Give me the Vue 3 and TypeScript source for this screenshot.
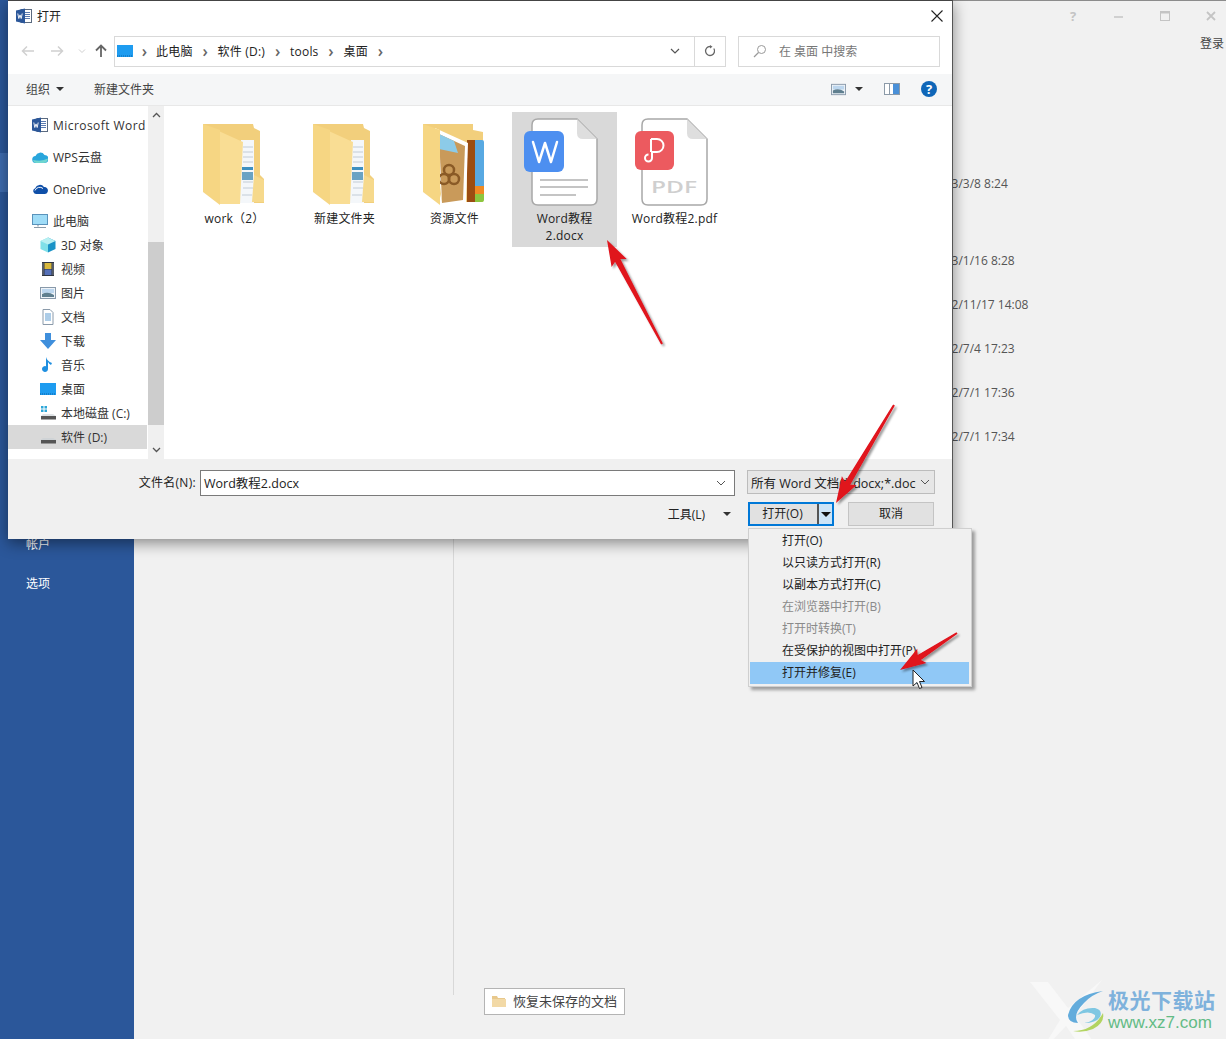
<script setup lang="ts">
const navRows = [
  { label: 'Microsoft Word', icon: 'word', cls: 'group wide' },
  { label: 'WPS云盘', icon: 'cloud', cls: 'group' },
  { label: 'OneDrive', icon: 'onedrive', cls: 'group' },
  { label: '此电脑', icon: 'pc', cls: 'pc' },
  { label: '3D 对象', icon: 'cube', cls: 'child' },
  { label: '视频', icon: 'film', cls: 'child' },
  { label: '图片', icon: 'pic', cls: 'child' },
  { label: '文档', icon: 'docs', cls: 'child' },
  { label: '下载', icon: 'down', cls: 'child' },
  { label: '音乐', icon: 'music', cls: 'child' },
  { label: '桌面', icon: 'desk', cls: 'child' },
  { label: '本地磁盘 (C:)', icon: 'diskc', cls: 'child' },
  { label: '软件 (D:)', icon: 'diskd', cls: 'child active' }
]

const menuItems = [
  { label: '打开(O)' },
  { label: '以只读方式打开(R)' },
  { label: '以副本方式打开(C)' },
  { label: '在浏览器中打开(B)', off: true },
  { label: '打开时转换(T)', off: true },
  { label: '在受保护的视图中打开(P)' },
  { label: '打开并修复(E)', hot: true }
]

const dates = [
  { text: '2023/3/8 8:24', gap: 0 },
  { text: '2023/1/16 8:28', gap: 55 },
  { text: '2022/11/17 14:08', gap: 22 },
  { text: '2022/7/4 17:23', gap: 22 },
  { text: '2022/7/1 17:36', gap: 22 },
  { text: '2022/7/1 17:34', gap: 22 }
]

// tail -> tip, the three red pointers drawn over the shot
const arrows = [
  [662, 344, 607, 240],
  [894, 405, 836, 503],
  [957, 633, 900, 670]
]

function arrowPoints(a: number[]) {
  const [x1, y1, x2, y2] = a
  const len = Math.hypot(x2 - x1, y2 - y1)
  const ux = (x2 - x1) / len
  const uy = (y2 - y1) / len
  const nx = -uy
  const ny = ux
  const at = (along: number, side: number) =>
    `${(x1 + ux * along + nx * side).toFixed(1)},${(y1 + uy * along + ny * side).toFixed(1)}`
  const neck = len - 23
  return [
    at(0, -1), at(neck, -3), at(neck - 3, -8.5), at(len, 0),
    at(neck - 3, 8.5), at(neck, 3), at(0, 1)
  ].join(' ')
}
</script>

<template>
  <div class="app">
    <svg width="0" height="0" class="defs">
      <defs>
        <symbol id="word" viewBox="0 0 16 16">
          <rect x="5" y="1.500" width="10.500" height="13" fill="#fff" stroke="#5a6a80" />
          <path d="M9 4.500h5M9 6.500h5M9 8.500h5M9 10.500h5" stroke="#5a7ab0" />
          <path d="M0 2.500 9 .5v15l-9-2z" fill="#2b579a" />
          <path d="M1.800 5.500l1 5 1.200-3.600 1.200 3.600 1-5" fill="none" stroke="#fff" stroke-width=".9" />
        </symbol>
        <symbol id="cloud" viewBox="0 0 16 16">
          <path d="M4 14a3.500 3.500 0 0 1-.5-7 5 5 0 0 1 9-1 4 4 0 0 1 0 8z" fill="#29a6dc" />
          <path d="M1 11a3.500 3.500 0 0 0 3 3h8a4 4 0 0 0 3.800-4.400Q10 13 1 11z" fill="#6fd6d0" />
        </symbol>
        <symbol id="onedrive" viewBox="0 0 16 16">
          <path d="M4 13a3 3 0 0 1-.8-5.800A5 5 0 0 1 12 6a3.600 3.600 0 0 1 3.800 4.500A3 3 0 0 1 13 13z" fill="#0f4fa8" />
          <path d="M3 9.500a5 5 0 0 1 8-2" fill="none" stroke="#fff" stroke-width="1" />
        </symbol>
        <symbol id="pc" viewBox="0 0 16 16">
          <rect x=".5" y="1.500" width="15" height="10" fill="#9fdcf7" stroke="#5a93bb" />
          <path d="M6 12v1.500M2 14.500h12" stroke="#8a9aa8" stroke-width="1.200" />
        </symbol>
        <symbol id="cube" viewBox="0 0 16 16">
          <path d="M8 .5 15.500 4v8L8 15.500z" fill="#1a93c7" />
          <path d="M8 .5.500 4v8L8 15.500z" fill="#7fe0e8" />
          <path d="M8 .5 15.500 4 8 7.500.500 4z" fill="#b8f0f2" />
        </symbol>
        <symbol id="film" viewBox="0 0 16 16">
          <rect x="2" y="1" width="12" height="14" fill="#2e3440" />
          <rect x="4.500" y="2" width="7" height="6" fill="#d8b83c" />
          <rect x="4.500" y="8.500" width="7" height="5.500" fill="#5570b8" />
          <path d="M3 2.500v11M13 2.500v11" stroke="#cfd6de" stroke-dasharray="1 1" />
        </symbol>
        <symbol id="pic" viewBox="0 0 16 16">
          <rect x=".5" y="2.500" width="15" height="11" fill="#eef3f8" stroke="#8899aa" />
          <path d="M2 4h12v4H2z" fill="#bcd6ee" />
          <path d="M2 12V9q6-3 12 1v2z" fill="#5f7f8f" />
        </symbol>
        <symbol id="docs" viewBox="0 0 16 16">
          <path d="M3 .5h7l3 3v12H3z" fill="#fff" stroke="#8a9aaa" />
          <path d="M5 5h6M5 7h6M5 9h6M5 11h6" stroke="#5a9ad0" />
        </symbol>
        <symbol id="down" viewBox="0 0 16 16">
          <path d="M5 0h6v7h5l-8 9-8-9h5z" fill="#3f8fdc" />
        </symbol>
        <symbol id="music" viewBox="0 0 16 16">
          <path d="M8 1v11a3 3 0 1 1-2-2.800V0q1 4 6 6l-1 2q-2-1-3-3z" fill="#1f8fe0" />
        </symbol>
        <symbol id="desk" viewBox="0 0 16 16">
          <rect y="2" width="16" height="12" fill="#1e9cf0" />
          <path d="M0 13h16" stroke="#0a63a8" stroke-dasharray="1 1" />
        </symbol>
        <symbol id="diskc" viewBox="0 0 16 16">
          <path d="M1 1h2.500v2.500H1zM4.500 1H7v2.500H4.500zM1 4.500h2.500V7H1zM4.500 4.500H7V7H4.500z" fill="#2ca6d8" />
          <path d="M3 9h10l3 2v3H1v-3z" fill="#dfe3e6" />
          <rect x="1" y="11" width="15" height="3.500" fill="#555" />
        </symbol>
        <symbol id="diskd" viewBox="0 0 16 16">
          <path d="M3 9h10l3 1.500V11H1v-.500z" fill="#cfd3d6" />
          <rect x="1" y="11" width="15" height="3.500" fill="#555" />
        </symbol>
        <symbol id="folder" viewBox="0 0 105 97">
          <path d="M21 12h50l1 4 6 3v44l4 4v24H40z" fill="#f2cf7c" />
          <path d="M59 28h13v63H57z" fill="#f4f7fa" />
          <path d="M61 35h10M61 40h10M61 45h10M61 50h10M61 70h10M61 76h10M60 83h10" stroke="#c2ccd6" />
          <path d="M60 55h11v3H60z" fill="#3d8fc0" />
          <path d="M60 60h11v8H60z" fill="#6aa3c4" />
          <path d="M72 63l10 5v22H70z" fill="#f6d98c" />
          <path d="M30 16l31 14-3 62H38z" fill="#f9dd94" />
          <path d="M21 12l17 6v75L21 80z" fill="#f6d683" />
        </symbol>
        <symbol id="folderArt" viewBox="0 0 105 97">
          <path d="M21 12h50v6l10 2v70H40z" fill="#f2cf7c" />
          <path d="M65 28h9v62h-9z" fill="#9b4d12" />
          <path d="M73 28h7q2 0 2 2v44h-9z" fill="#58a9e2" />
          <path d="M73 74h9v8h-9z" fill="#ef8a24" />
          <path d="M73 82h9v6q0 2-2 2h-7z" fill="#8cc63f" />
          <path d="M33 16l33 15-2 60-24 3z" fill="#fff" />
          <path d="M37 22l26 12-2 54-21 3z" fill="#c99a5a" />
          <path d="M37 22l15 7 4 12-19-4z" fill="#8ccbe8" />
          <circle cx="47" cy="58" r="5" fill="none" stroke="#8a5a26" stroke-width="2.500" />
          <circle cx="42" cy="67" r="5" fill="none" stroke="#8a5a26" stroke-width="2.500" />
          <circle cx="52" cy="67" r="5" fill="none" stroke="#8a5a26" stroke-width="2.500" />
          <path d="M21 12l17 6v75L21 80z" fill="#f6d683" />
        </symbol>
        <symbol id="sheet" viewBox="0 0 105 97">
          <path d="M26 7h39l20 20v60q0 6-6 6H26q-6 0-6-6V13q0-6 6-6z" fill="#fff" stroke="#a8a8a8" stroke-width="1.500" />
          <path d="M65 7v14q0 6 6 6h14z" fill="#dedede" />
        </symbol>
      </defs>
    </svg>

    <aside class="sidebar">
      <div class="side-active"></div>
      <div class="side-spacer"></div>
      <div class="side-row">帐户</div>
      <div class="side-row">选项</div>
    </aside>

    <main class="backstage">
      <div class="recent-left"></div>
      <div class="recent-right">
        <div class="win-controls">
          <span class="win-btn win-q">?</span>
          <svg class="win-btn" width="14" height="14" viewBox="0 0 14 14"><path d="M2 8h9" stroke="#c4c4c4" stroke-width="1.500" /></svg>
          <svg class="win-btn" width="14" height="14" viewBox="0 0 14 14"><rect x="2.500" y="2.500" width="9" height="9" fill="none" stroke="#c4c4c4" /><path d="M2.500 3.500h9" stroke="#c4c4c4" stroke-width="2" /></svg>
          <svg class="win-btn" width="14" height="14" viewBox="0 0 14 14"><path d="M3 3l8 8M11 3l-8 8" stroke="#c4c4c4" stroke-width="1.800" /></svg>
        </div>
        <div class="login">登录</div>
        <div class="dates">
          <div v-for="d in dates" :key="d.text" class="date" :style="{ marginTop: d.gap + 'px' }">{{ d.text }}</div>
        </div>
        <button class="restore">
          <svg width="16" height="14" viewBox="0 0 16 14"><path d="M1 2h5l1 2h7v9H1z" fill="#e8c88c" /><path d="M1 5h14v8H1z" fill="#f2d9a6" /></svg>
          恢复未保存的文档
        </button>
      </div>
    </main>

    <section class="dialog">
      <header class="title-bar">
        <svg class="title-icon" width="16" height="16"><use href="#word" /></svg>
        <span class="title-text">打开</span>
        <svg class="title-close" width="14" height="14" viewBox="0 0 14 14"><path d="M1.500 1.500l11 11M12.500 1.500l-11 11" stroke="#222" stroke-width="1.100" /></svg>
      </header>

      <div class="nav-bar">
        <div class="nav-btns">
          <svg width="14" height="12" viewBox="0 0 14 12"><path d="M13 6H2M6 1.500 1.500 6 6 10.500" fill="none" stroke="#d0d0d0" stroke-width="1.500" /></svg>
          <svg width="14" height="12" viewBox="0 0 14 12"><path d="M1 6h11M8 1.500 12.500 6 8 10.500" fill="none" stroke="#d0d0d0" stroke-width="1.500" /></svg>
          <svg width="8" height="6" viewBox="0 0 8 6"><path d="M1 1.500 4 4.500 7 1.500" fill="none" stroke="#d0d0d0" /></svg>
          <svg width="12" height="14" viewBox="0 0 12 14"><path d="M6 13V2M1 6.500 6 1.500l5 5" fill="none" stroke="#666" stroke-width="1.800" /></svg>
        </div>
        <div class="addr">
          <svg width="16" height="16"><use href="#desk" /></svg>
          <span class="crumb-sep">›</span><span class="crumb">此电脑</span>
          <span class="crumb-sep">›</span><span class="crumb">软件 (D:)</span>
          <span class="crumb-sep">›</span><span class="crumb">tools</span>
          <span class="crumb-sep">›</span><span class="crumb">桌面</span>
          <span class="crumb-sep">›</span>
          <svg class="addr-drop" width="10" height="6" viewBox="0 0 10 6"><path d="M1 1l4 4 4-4" fill="none" stroke="#555" stroke-width="1.200" /></svg>
        </div>
        <div class="addr-refresh">
          <svg width="12" height="12" viewBox="0 0 12 12"><path d="M9.800 3.500A4.500 4.500 0 1 1 6 1.500" fill="none" stroke="#666" stroke-width="1.300" /><path d="M6 0v3.500l-2.500-1.700z" fill="#666" transform="matrix(-1 0 0 1 12 0)" /></svg>
        </div>
        <div class="search">
          <svg width="14" height="14" viewBox="0 0 14 14"><circle cx="8.500" cy="5.500" r="4" fill="none" stroke="#999" /><path d="M5.500 8.500 1 13" stroke="#999" stroke-width="1.200" /></svg>
          <span>在 桌面 中搜索</span>
        </div>
      </div>

      <div class="tool-bar">
        <span class="tool-btn">组织<i class="caret"></i></span>
        <span class="tool-btn tool-new">新建文件夹</span>
        <span class="tool-right">
          <svg width="15" height="15"><use href="#pic" /></svg>
          <i class="caret caret-view"></i>
          <svg class="pane-icon" width="16" height="12" viewBox="0 0 16 12"><rect x=".5" y=".5" width="15" height="11" fill="#fff" stroke="#8c9aa8" /><rect x="9" y="1" width="6" height="10" fill="#4a90d8" /><path d="M5.500 1v10" stroke="#8c9aa8" /></svg>
          <span class="help">?</span>
        </span>
      </div>

      <div class="body">
        <nav class="tree">
          <div v-for="r in navRows" :key="r.label" class="tree-row" :class="r.cls">
            <svg width="16" height="16"><use :href="'#' + r.icon" /></svg>
            <span>{{ r.label }}</span>
          </div>
        </nav>
        <div class="scroll">
          <svg width="9" height="6" viewBox="0 0 9 6"><path d="M1 5l3.500-3.500L8 5" fill="none" stroke="#555" stroke-width="1.300" /></svg>
          <div class="scroll-track"><div class="scroll-thumb"></div></div>
          <svg width="9" height="6" viewBox="0 0 9 6"><path d="M1 1l3.500 3.500L8 1" fill="none" stroke="#555" stroke-width="1.300" /></svg>
        </div>
        <div class="files">
          <div class="file">
            <svg width="105" height="97"><use href="#folder" /></svg>
            <span class="file-name">work（2）</span>
          </div>
          <div class="file">
            <svg width="105" height="97"><use href="#folder" /></svg>
            <span class="file-name">新建文件夹</span>
          </div>
          <div class="file">
            <svg width="105" height="97"><use href="#folderArt" /></svg>
            <span class="file-name">资源文件</span>
          </div>
          <div class="file selected">
            <svg width="105" height="97" viewBox="0 0 105 97">
              <use href="#sheet" width="105" height="97" />
              <rect x="12" y="19" width="40" height="41" rx="6" fill="#4d8ff0" />
              <path d="M21 30l6 20 6-19 6 19 6-20" fill="none" stroke="#fff" stroke-width="2.500" stroke-linejoin="round" stroke-linecap="round" />
              <path d="M28 68h48M28 75h48M28 83h36" stroke="#c4c4c4" stroke-width="2" />
            </svg>
            <span class="file-name">Word教程<br />2.docx</span>
          </div>
          <div class="file">
            <svg width="105" height="97" viewBox="0 0 105 97">
              <use href="#sheet" width="105" height="97" />
              <rect x="13" y="19" width="39" height="39" rx="6" fill="#ec5a5f" />
              <path d="M28 27h6a6.500 6.500 0 0 1 0 13h-5v6a3.500 3.500 0 1 1-3.500-3.500" fill="none" stroke="#fff" stroke-width="2" transform="translate(1 0)" />
              <path d="M29 27v13" stroke="#fff" stroke-width="2" />
              <text x="29" y="81" class="pdf-mark" textLength="46" lengthAdjust="spacingAndGlyphs">PDF</text>
            </svg>
            <span class="file-name">Word教程2.pdf</span>
          </div>
        </div>
      </div>

      <footer class="foot">
        <div class="foot-row">
          <label class="fname-label">文件名(N):</label>
          <div class="fname-input">
            <span>Word教程2.docx</span>
            <svg width="10" height="6" viewBox="0 0 10 6"><path d="M1 1l4 4 4-4" fill="none" stroke="#555" /></svg>
          </div>
          <div class="ftype">
            <span class="ftype-text">所有 Word 文档(*.docx;*.docm;*.dotx)</span>
            <svg width="10" height="6" viewBox="0 0 10 6"><path d="M1 1l4 4 4-4" fill="none" stroke="#555" /></svg>
          </div>
        </div>
        <div class="foot-row foot-actions">
          <span class="tools">工具(L)<i class="caret caret-tools"></i></span>
          <div class="open-btn">
            <span class="open-main">打开(O)</span>
            <span class="open-drop"><i class="caret caret-open"></i></span>
          </div>
          <div class="cancel-btn">取消</div>
        </div>
      </footer>
    </section>

    <div class="menu">
      <div v-for="m in menuItems" :key="m.label" class="menu-item" :class="{ off: m.off, hot: m.hot }">{{ m.label }}</div>
    </div>

    <svg class="pointers" width="1226" height="1039">
      <defs>
        <filter id="arrowShadow" x="-30%" y="-30%" width="160%" height="160%">
          <feDropShadow dx="2" dy="2" stdDeviation="1.200" flood-color="#000" flood-opacity=".4" />
        </filter>
      </defs>
      <polygon v-for="(a, i) in arrows" :key="i" :points="arrowPoints(a)" fill="#e0121c" filter="url(#arrowShadow)" />
      <path d="M913 670v16l4-3.500 2.500 6 2.500-1-2.500-6h5z" fill="#fff" stroke="#222" stroke-width="1" />
    </svg>

    <div class="mark">
      <svg class="mark-x" width="90" height="80" viewBox="0 0 90 80"><path d="M0 2h18l20 26L72 0 45 36l30 42H58L36 46 8 76l22-36z" fill="#f8f8f8" /></svg>
      <svg class="mark-logo" width="44" height="44" viewBox="0 0 44 44">
        <path d="M38 2Q8 6 3 26q0 8 10 8-6-8 6-20Q26 6 38 2z" fill="#4a9fd8" />
        <path d="M12 26q6-8 18-7 8 2 5 9-4 6-16 6 12-2 11-8-6-5-18 0z" fill="#6cc0e0" />
        <path d="M8 42q20 0 30-18 2 10-10 16-10 4-20 2z" fill="#a8cf48" />
      </svg>
      <div class="mark-text">
        <div class="mark-cn">极光下载站</div>
        <div class="mark-url">www.xz7.com</div>
      </div>
    </div>
  </div>
</template>

<style scoped>
.app,
.app * {
  box-sizing: border-box;
}

.app {
  position: relative;
  display: flex;
  width: 1226px;
  height: 1039px;
  overflow: hidden;
  background: #f1f1f1;
  font-family: "Open Sans", "Noto Sans CJK SC", sans-serif;
  font-size: 12px;
  color: #222;
}

.defs {
  position: absolute;
}

.sidebar {
  width: 134px;
  flex-shrink: 0;
  padding-top: 153px;
  background: #2b579a;
  color: #fff;
}

.side-active {
  height: 39px;
  background: #3e6cb0;
}

.side-spacer {
  height: 333px;
}

.side-row {
  height: 39px;
  line-height: 39px;
  padding-left: 26px;
}

.backstage {
  flex: 1;
  display: flex;
  border-top: 1px solid #8c8c8c;
}

.recent-left {
  width: 320px;
  height: 994px;
  border-right: 1px solid #d8d8d8;
}

.recent-right {
  flex: 1;
  display: flex;
  flex-direction: column;
  padding-left: 30px;
  padding-bottom: 24px;
}

.win-controls {
  display: flex;
  justify-content: flex-end;
  align-items: center;
  gap: 32px;
  height: 30px;
  padding-right: 8px;
}

.win-btn {
  width: 14px;
  text-align: center;
}

.win-q {
  color: #c4c4c4;
  font-weight: 700;
  font-size: 13px;
}

.login {
  align-self: flex-end;
  margin-top: 4px;
  padding-right: 2px;
  line-height: 18px;
  color: #444;
}

.dates {
  margin-top: 120px;
  padding-left: 447px;
  color: #555;
  white-space: nowrap;
}

.date {
  line-height: 22px;
}

.restore {
  margin-top: auto;
  align-self: flex-start;
  display: flex;
  align-items: center;
  gap: 6px;
  width: 141px;
  height: 27px;
  padding: 0 0 2px 6px;
  border: 1px solid #b4b4b4;
  background: #fff;
  font: inherit;
  font-size: 13px;
  white-space: nowrap;
  color: #444;
}

.dialog {
  position: absolute;
  left: 8px;
  top: 0;
  width: 945px;
  height: 539px;
  display: flex;
  flex-direction: column;
  background: #fff;
  border-top: 1px solid #444;
  border-right: 1px solid #555;
  box-shadow: 0 4px 14px rgba(0, 0, 0, 0.45);
}

.title-bar {
  display: flex;
  align-items: center;
  height: 30px;
  padding: 0 8px;
}

.title-text {
  margin-left: 5px;
}

.title-close {
  margin-left: auto;
}

.nav-bar {
  display: flex;
  align-items: center;
  height: 43px;
  padding-bottom: 3px;
}

.nav-btns {
  width: 106px;
  flex-shrink: 0;
  display: flex;
  align-items: center;
  padding-left: 13px;
}

.nav-btns svg:nth-child(1) {
  margin-right: 15px;
}

.nav-btns svg:nth-child(2) {
  margin-right: 14px;
}

.nav-btns svg:nth-child(3) {
  margin-right: 9px;
}

.addr {
  display: flex;
  align-items: center;
  width: 580px;
  height: 31px;
  padding-left: 2px;
  border: 1px solid #d9d9d9;
  border-right: 0;
  white-space: nowrap;
  color: #222;
}

.crumb {
  letter-spacing: 0.2px;
}

.crumb-sep {
  width: 25px;
  text-align: center;
  font-size: 16px;
  font-weight: 600;
  line-height: 14px;
  color: #666;
}

.crumb-sep:first-of-type {
  width: 23px;
}

.addr-drop {
  margin-left: auto;
  margin-right: 14px;
}

.addr-refresh {
  width: 32px;
  height: 31px;
  display: flex;
  align-items: center;
  justify-content: center;
  border: 1px solid #d9d9d9;
}

.search {
  margin-left: 12px;
  width: 202px;
  height: 31px;
  display: flex;
  align-items: center;
  gap: 12px;
  padding-left: 14px;
  border: 1px solid #d9d9d9;
  color: #777;
}

.tool-bar {
  display: flex;
  align-items: center;
  height: 32px;
  padding: 0 0 1px 18px;
  background: #f5f6f7;
  border-bottom: 1px solid #e8e8e8;
  color: #444;
}

.tool-btn {
  display: flex;
  align-items: center;
}

.tool-new {
  margin-left: 30px;
}

.caret {
  display: inline-block;
  width: 0;
  height: 0;
  margin-left: 6px;
  border-left: 4px solid transparent;
  border-right: 4px solid transparent;
  border-top: 4px solid #333;
}

.tool-right {
  margin-left: auto;
  display: flex;
  align-items: center;
  padding-right: 15px;
}

.caret-view {
  margin-left: 9px;
}

.pane-icon {
  margin-left: 21px;
}

.help {
  width: 16px;
  height: 16px;
  margin-left: 21px;
  border-radius: 50%;
  background: #0f66b8;
  color: #fff;
  font-size: 13px;
  font-weight: 700;
  line-height: 16px;
  text-align: center;
}

.body {
  display: flex;
  height: 353px;
  background: #fff;
}

.tree {
  width: 139px;
  flex-shrink: 0;
  padding-top: 3px;
  color: #333;
  white-space: nowrap;
  overflow: hidden;
}

.tree-row {
  display: flex;
  align-items: center;
  gap: 5px;
}

.tree-row.group {
  height: 32px;
  padding-left: 24px;
}

.tree-row.wide {
  letter-spacing: 0.45px;
}

.tree-row.pc {
  height: 24px;
  margin-top: 4px;
  padding-left: 24px;
}

.tree-row.child {
  height: 24px;
  padding-left: 32px;
}

.tree-row.active {
  background: #d9d9d9;
}

.scroll {
  width: 16px;
  margin-left: 1px;
  display: flex;
  flex-direction: column;
  align-items: center;
  padding: 6px 0 6px;
  background: #f0f0f0;
}

.scroll-track {
  flex: 1;
  width: 100%;
  padding-top: 124px;
}

.scroll-thumb {
  height: 183px;
  background: #cdcdcd;
}

.files {
  display: flex;
  gap: 5px;
  align-items: flex-start;
  padding: 6px 0 0 18px;
}

.file {
  width: 105px;
  display: flex;
  flex-direction: column;
  align-items: center;
  padding-bottom: 3px;
}

.file.selected {
  background: #d9d9d9;
}

.file-name {
  margin-top: 1px;
  text-align: center;
  line-height: 17px;
  letter-spacing: 0.2px;
  color: #222;
  white-space: nowrap;
}

.pdf-mark {
  font-family: "Open Sans", sans-serif;
  font-size: 17px;
  font-weight: 600;
  fill: #cfcfcf;
}

.foot {
  flex: 1;
  background: #f0f0f0;
  padding: 11px 17px 0 0;
}

.foot-row {
  display: flex;
  align-items: flex-start;
}

.fname-label {
  width: 191px;
  height: 26px;
  line-height: 26px;
  text-align: right;
  letter-spacing: 0.3px;
  padding-right: 3px;
}

.fname-input {
  width: 535px;
  height: 26px;
  margin-left: 1px;
  display: flex;
  align-items: center;
  justify-content: space-between;
  padding: 0 8px 1px 3px;
  border: 1px solid #7a7a7a;
  background: #fff;
  font-size: 12.5px;
}

.ftype {
  width: 188px;
  height: 24px;
  margin-left: 12px;
  display: flex;
  align-items: center;
  justify-content: space-between;
  padding: 0 4px 0 3px;
  border: 1px solid #bcbcbc;
  background: #e6e6e6;
  white-space: nowrap;
}

.ftype-text {
  width: 165px;
  overflow: hidden;
  font-size: 12.5px;
}

.foot-actions {
  margin-top: 6px;
  padding-right: 1px;
  justify-content: flex-end;
  align-items: center;
}

.tools {
  display: flex;
  align-items: center;
  margin-right: 17px;
}

.caret-tools {
  margin-left: 18px;
}

.open-btn {
  display: flex;
  width: 86px;
  height: 24px;
  border: 2px solid #0078d7;
  background: #e1e1e1;
}

.open-main {
  flex: 1;
  padding-right: 2px;
  line-height: 20px;
  text-align: center;
}

.open-drop {
  width: 15px;
  display: flex;
  align-items: center;
  justify-content: center;
  border-left: 2px solid #555;
  background: #cce4f7;
}

.caret-open {
  margin: 0;
  border-left-width: 5px;
  border-right-width: 5px;
  border-top-width: 5px;
  border-top-color: #111;
}

.cancel-btn {
  width: 86px;
  height: 24px;
  margin-left: 14px;
  line-height: 22px;
  text-align: center;
  background: #e1e1e1;
  border: 1px solid #c4c4c4;
}

.menu {
  position: absolute;
  left: 748px;
  top: 528px;
  width: 224px;
  height: 159px;
  padding: 1px 2px 0 1px;
  background: #f0f0f0;
  border: 1px solid #cfcfcf;
  box-shadow: 3px 3px 3px rgba(0, 0, 0, 0.35);
}

.menu-item {
  height: 22px;
  line-height: 22px;
  padding-left: 32px;
  color: #222;
}

.menu-item.off {
  color: #8a8a8a;
}

.menu-item.hot {
  background: #90c8f6;
}

.pointers {
  position: absolute;
  left: 0;
  top: 0;
  pointer-events: none;
}

.mark {
  position: absolute;
  left: 1065px;
  top: 987px;
  display: flex;
  gap: 0;
}

.mark-x {
  position: absolute;
  left: -35px;
  top: -7px;
}

.mark-logo {
  position: relative;
  margin-top: 2px;
  opacity: 0.85;
}

.mark-text {
  position: relative;
  margin-left: -1px;
}

.mark-cn {
  font-size: 21px;
  font-weight: 700;
  line-height: 26px;
  letter-spacing: 0.5px;
  color: #7fb2dc;
}

.mark-url {
  font-family: "Liberation Sans", sans-serif;
  font-size: 17px;
  line-height: 20px;
  color: #63bb85;
}
</style>
